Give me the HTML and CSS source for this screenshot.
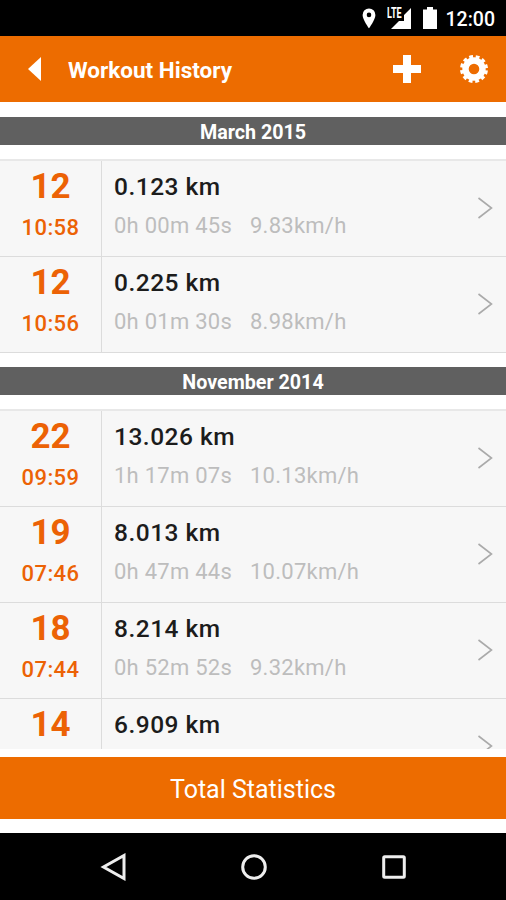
FILE: index.html
```
<!DOCTYPE html>
<html lang="en">
<head>
    <meta charset="UTF-8">
    <title>Workout History</title>
    <link rel="stylesheet" href="styles.css">
</head>
<body>
<div class="status">
    <svg class="pin" width="14" height="21" viewBox="0 0 14 21"><path fill="#fff" fill-rule="evenodd" d="M7 0.5a6.4 6.4 0 0 0-6.4 6.4C.6 11.5 7 20.3 7 20.3s6.4-8.8 6.4-13.4A6.4 6.4 0 0 0 7 .5zM7 4.6a2.3 2.3 0 1 1 0 4.6 2.3 2.3 0 0 1 0-4.6z"/></svg>
    <div class="signal">
        <svg width="26" height="23" viewBox="0 0 26 23"><path fill="#fff" d="M25 1v21H5l8-8h5V8z"/></svg>
        <span class="lte">LTE</span>
    </div>
    <svg class="battery" width="14" height="22" viewBox="0 0 14 22"><path fill="#fff" d="M4 0h6v2.500h4V22H0V2.500H4z"/></svg>
    <span class="clock">12:00</span>
</div>
<div class="header">
    <svg class="back" width="13" height="24" viewBox="0 0 13 24"><path fill="#fff" d="M13 0v24L0 12z"/></svg>
    <h1>Workout History</h1>
    <svg class="add" width="28" height="28" viewBox="0 0 28 28"><path fill="#fff" d="M10 0h8v10h10v8H18v10h-8V18H0v-8h10z"/></svg>
    <svg class="gear" width="28" height="28" viewBox="-14 -14 28 28">
        <circle r="8.500" fill="none" stroke="#fff" stroke-width="6.400"/>
        <circle r="12.300" fill="none" stroke="#fff" stroke-width="3.400" stroke-dasharray="3.700 2.740" stroke-dashoffset="-1.370"/>
    </svg>
</div>
<div class="content">
    <h2>March 2015</h2>
    <ul>
        <li>
            <div class="date"><b>12</b><span>10:58</span></div>
            <div class="info"><b>0.123 km</b><p><span>0h 00m 45s</span><span>9.83km/h</span></p></div>
            <svg class="arrow" width="16" height="24" viewBox="0 0 16 24"><path d="M1.500 2l13 10-13 10"/></svg>
        </li>
        <li>
            <div class="date"><b>12</b><span>10:56</span></div>
            <div class="info"><b>0.225 km</b><p><span>0h 01m 30s</span><span>8.98km/h</span></p></div>
            <svg class="arrow" width="16" height="24" viewBox="0 0 16 24"><path d="M1.500 2l13 10-13 10"/></svg>
        </li>
    </ul>
    <h2>November 2014</h2>
    <ul>
        <li>
            <div class="date"><b>22</b><span>09:59</span></div>
            <div class="info"><b>13.026 km</b><p><span>1h 17m 07s</span><span>10.13km/h</span></p></div>
            <svg class="arrow" width="16" height="24" viewBox="0 0 16 24"><path d="M1.500 2l13 10-13 10"/></svg>
        </li>
        <li>
            <div class="date"><b>19</b><span>07:46</span></div>
            <div class="info"><b>8.013 km</b><p><span>0h 47m 44s</span><span>10.07km/h</span></p></div>
            <svg class="arrow" width="16" height="24" viewBox="0 0 16 24"><path d="M1.500 2l13 10-13 10"/></svg>
        </li>
        <li>
            <div class="date"><b>18</b><span>07:44</span></div>
            <div class="info"><b>8.214 km</b><p><span>0h 52m 52s</span><span>9.32km/h</span></p></div>
            <svg class="arrow" width="16" height="24" viewBox="0 0 16 24"><path d="M1.500 2l13 10-13 10"/></svg>
        </li>
        <li>
            <div class="date"><b>14</b></div>
            <div class="info"><b>6.909 km</b></div>
            <svg class="arrow" width="16" height="24" viewBox="0 0 16 24"><path d="M1.500 2l13 10-13 10"/></svg>
        </li>
    </ul>
</div>
<div class="total">Total Statistics</div>
<div class="nav">
    <svg width="28" height="28" viewBox="0 0 28 28"><path d="M24 2.500v23L3.500 14z"/></svg>
    <svg width="28" height="28" viewBox="0 0 28 28"><circle cx="14" cy="14" r="11.300"/></svg>
    <svg width="28" height="28" viewBox="0 0 28 28"><rect x="3.700" y="3.700" width="20.600" height="20.600" rx="1"/></svg>
</div>
</body>
</html>
```
FILE: styles.css
```
*{
    margin: 0;padding: 0;
    box-sizing: border-box;
}
ul{list-style: none}
svg{display: block;flex: none}
body{
    height: 900px;
    display: flex;
    flex-direction: column;
    overflow: hidden;
    background: #fff;
    font-family: Roboto, "Liberation Sans", sans-serif;
}
.status{
    height: 36px;
    flex: none;
    display: flex;
    align-items: center;
    justify-content: flex-end;
    padding-right: 11px;
    background: #000;
    color: #fff;
}
.signal{
    position: relative;
    margin: 0 11px 0 10px;
}
/*LTE压在信号三角上面*/
.lte{
    position: absolute;
    left: 1px;top: 0;
    font-size: 14px;
    line-height: 13px;
    font-weight: bold;
    transform: scaleX(.65);
    transform-origin: left;
}
.clock{
    margin-left: 9px;
    padding-top: 3px;
    font-size: 19.5px;
    line-height: 24px;
    font-weight: 500;
}
.header{
    height: 66px;
    flex: none;
    display: flex;
    align-items: center;
    padding: 0 18px 0 28px;
    background: #ed6c00;
    color: #fff;
}
h1{
    flex: 1;
    margin-left: 27px;
    padding-top: 1px;
    font-size: 22.5px;
    line-height: 28px;
    font-weight: bold;
}
.gear{margin-left: 39px}
.content{
    height: 647px;
    flex: none;
    overflow: hidden;
    padding-top: 15px;
}
h2{
    height: 28px;
    margin-bottom: 14px;
    background: #606060;
    color: #fff;
    font-size: 19.7px;
    line-height: 31px;
    font-weight: bold;
    text-align: center;
}
ul{
    margin-bottom: 14px;
    border-top: 2px solid #e8e8e8;
}
li{
    display: flex;
    height: 96px;
    background: #f7f7f7;
    border-bottom: 1px solid #dcdcdc;
}
.date{
    width: 102px;
    border-right: 1px solid #dcdcdc;
    color: #ec6205;
    text-align: center;
}
.date b{
    display: block;
    padding-top: 5px;
    font-size: 35px;
    line-height: 42px;
}
.date span{
    display: block;
    margin-top: 7px;
    font-size: 22px;
    line-height: 26px;
    font-weight: 500;
    letter-spacing: .4px;
}
.info{
    flex: 1;
    padding-left: 12px;
}
.info b{
    display: block;
    padding-top: 11px;
    font-size: 24.5px;
    line-height: 30px;
    font-weight: 500;
    letter-spacing: .5px;
    color: #1c1c1c;
}
.info p{
    display: flex;
    gap: 18px;
    margin-top: 11px;
    font-size: 22px;
    line-height: 26px;
    letter-spacing: .25px;
    color: #bdbdbd;
}
.arrow{
    align-self: center;
    margin: 0 13px 2px 0;
    fill: none;
    stroke: #aaa;
    stroke-width: 1.6;
}
.total{
    height: 62px;
    flex: none;
    margin: 8px 0 14px;
    background: #ed6c00;
    color: #fff;
    font-size: 25px;
    line-height: 66px;
    text-align: center;
}
.nav{
    flex: 1;
    display: flex;
    align-items: center;
    justify-content: center;
    gap: 112px;
    padding-left: 1px;
    background: #000;
    fill: none;
    stroke: #eee;
    stroke-width: 3;
}
```
